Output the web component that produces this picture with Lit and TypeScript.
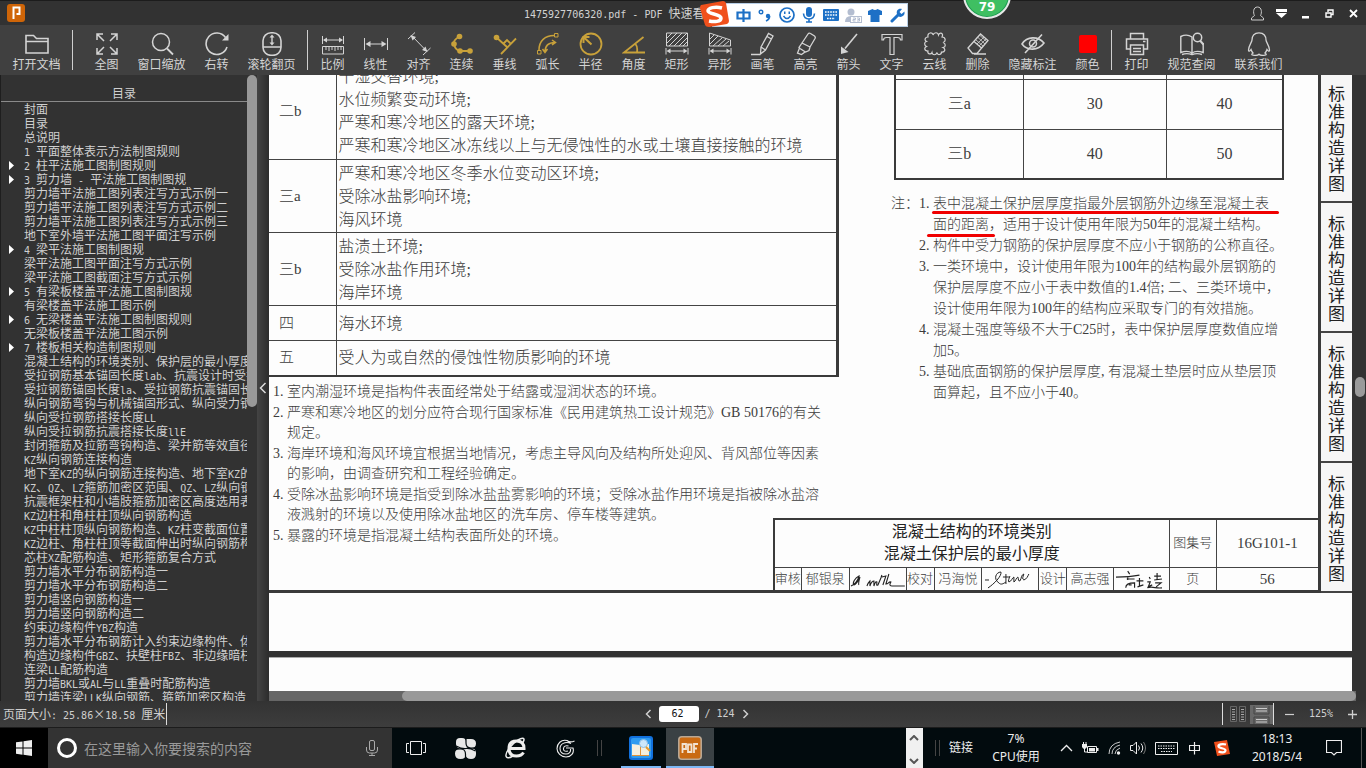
import { LitElement, html, svg, css, TemplateResult } from "lit";
import { customElement } from "lit/decorators.js";
import { classMap } from "lit/directives/class-map.js";

/** Wraps runs of ASCII in a half-width face so that they sit on the same grid as the Chinese text. */
const mixed = (text: string) =>
  text
    .split(/([\x20-\x7e]+)/)
    .filter((s) => s !== "")
    .map((s) => (/^[\x20-\x7e]/.test(s) ? html`<span class="half">${s}</span>` : s));

const icon = (body: TemplateResult, w = 24, h = 24, cls = "ico") =>
  html`<svg class=${cls} width=${w} height=${h} viewBox="0 0 ${w} ${h}" aria-hidden="true">${body}</svg>`;

const G: Record<string, TemplateResult> = {
  folder: svg`<path d="M1 21V3.5h7.5l3 3H23V21z M1 9.5h22" stroke-width="1.6"/>`,
  fit: svg`<path d="M2 8V2h6M2 2l7 7M16 2h6v6M22 2l-7 7M2 16v6h6M2 22l7-7M22 16v6h-6M22 22l-7-7" stroke-width="1.5"/>`,
  zoom: svg`<circle cx="11" cy="10" r="8.5" stroke-width="1.5"/><path d="M17 16.500l6 6" stroke-width="1.8"/>`,
  rotate: svg`<path d="M20.500 5.500A10.700 10.700 0 1 0 22 15" stroke-width="1.6"/><path d="M17 8.500h6.500V2z" class="fill"/>`,
  mouse: svg`<rect x="3" y=".8" width="18" height="22.500" rx="8" stroke-width="1.6"/><path d="M3 15h18M12 4v8" stroke-width="1.4"/><path d="M9.500 5.500L12 2.500l2.500 3zM9.500 10.500L12 13.500l2.500-3z" class="fill"/>`,
  ratio: svg`<path d="M1.500 4v8M22.500 4v8M3 8h18M1.500 14.500h21v7.500h-21zM5 15v3M8 15v4M11 15v3M14 15v4M17 15v3M20 15v3"/><path d="M2 8l4-2.500v5zM22 8l-4-2.500v5z" class="fill"/>`,
  linear: svg`<path d="M.5 6v12M23.500 6v12M3 12h18"/><path d="M1.500 12l5-3v6zM22.500 12l-5-3v6z" class="fill"/>`,
  align: svg`<path d="M1 7l7-6.500M16 23l7.500-7M5 4l14.500 15"/><path d="M3.500 3l5.500 2-3.500 3.500zM20.500 20l-5.500-2 3.500-3.500z" class="fill"/>`,
  chain: svg`<path d="M9.500 4.500Q3 8 4 12q1 6 6 7H20" stroke-width="1.8"/><g class="fill"><circle cx="9.500" cy="4.500" r="2.800"/><circle cx="4" cy="12" r="2.800"/><circle cx="10" cy="19" r="2.800"/><circle cx="20" cy="19" r="2.800"/></g>`,
  perp: svg`<path d="M3 5l11 10M8 22L23 6.500M10 12l4-4 4 4" stroke-width="1.8"/><circle cx="3.500" cy="5.500" r="2.800" class="fill"/>`,
  arc: svg`<path d="M3 18C3 9 9 3.500 18 3.500M9 20c0-6 3-9.500 10-9.500M16 8l3.500 2.500L16 13M6.500 17L9 20.500l2.500-3.500" stroke-width="1.5"/><path d="M1.500 18.500h3.500v3.500H1.500zM18.500 1.500H22V5h-3.500z"/>`,
  radius: svg`<circle cx="12" cy="12" r="10.500" stroke-width="1.800"/><path d="M12.500 12.500L5 5.500M4.500 11V5h6" stroke-width="2"/>`,
  angle: svg`<path d="M21.500 5L2 20.500h21M13.500 12c2 2.500 2 5 1.500 8" stroke-width="1.8"/>`,
  rectA: svg`<path d="M1.500 1h21v13h-21zM2 6l5-5M2 11L12 1M4 14L17 1M9 14L22 1M14 14l8-8M18 14l4-4M1 16v6.500M23 16v6.500M3 19h18"/><path d="M1.500 19l4-2.500v5zM22.500 19l-4-2.500v5z" class="fill"/>`,
  polyA: svg`<path d="M1.500 1L22.500 8v6h-21zM2 7l4-4M2 12l8-8M5 14l9-8M10 14l8-7M15 14l6-5M1 16v6.500M23 16v6.500M3 19h18"/><path d="M1.500 19l4-2.500v5zM22.500 19l-4-2.500v5z" class="fill"/>`,
  pen: svg`<path d="M10 15L17.500 1.500l4.500 2.500-7.500 14-5 4zM10 15l4.500 3M16 4.500l4.500 2.500M0 22.500h9.500" stroke-width="1.3"/>`,
  marker: svg`<path d="M8 11L14 2q1-1.500 2.500-.5l4 2.500q1.300 1 .5 2.500L16 15zM8 11l8 4-1 3.500-3.500 1.500L6 16.500l-1-1zM5.500 16l-2 5 4 1.500 3.500-2.500" stroke-width="1.3"/>`,
  arrow: svg`<path d="M20 2L8 16.500" stroke-width="1.6"/><path d="M4 22V14.500l7.500 5.500z" class="fill"/>`,
  text: svg`<path d="M2 2.500h20V8h-1.500q0-2.500-3-2.500H14v17h-4v-17H6.500q-3 0-3 2.500H2z" stroke-width="1.2"/>`,
  cloud: svg`<path d="M5 5C4 0 10 0 10 3c1-3 5-3 5.500 0C17 0 21 1 19 5c4 0 4 5 1 5.500 3 1 3 4.500 0 5 3 1.500 2 5-1.500 4.500 0 3-4 3.500-4.500.5-1 3-4.500 3-5 0C8 23 4 22 5 19c-4 0-4-3.500-1.500-4.500C1 13.500 1 10 3.500 9.500 1 8 2 5 5 5z" stroke-width="1.2"/>`,
  eraser: svg`<path d="M2 16L14.500 2l7.500 6.500L11 21.500H6.500zM8 9.500l7.500 6.500M8 22h12" stroke-width="1.300"/><path d="M12 5.500l7 6.500M10 8l7 6M14 3.500l6.500 6M18 5l-7 7M20 7l-7 7" stroke-width=".8"/>`,
  hide: svg`<path d="M1 12C6 4 17 4 23 11 17 19 6 19 1 12zM4 21L21 2.500" stroke-width="1.6"/><circle cx="12" cy="11.500" r="3.500" stroke-width="1.5"/>`,
  color: svg`<rect x="3" y="3" width="18" height="18" rx="2" class="red"/>`,
  print: svg`<path d="M5.500 7V1.500h13V7M5 17H1.500V7h21v10H19M5.500 13h13v9.500h-13zM8 16.500h8M8 19.500h8" stroke-width="1.5"/><path d="M18 9.500h2.500" stroke-width="1.5"/>`,
  book: svg`<path d="M12 21C9 19 5 19 .8 20.500V4.500C5 2.500 9 3 12 5v16c3-2 7-2 11.200-.5V11M2 22.500c4-1.500 7-1 10 0 3-1 6-1.500 10 0" stroke-width="1.4"/><circle cx="17.500" cy="5.500" r="4.200" stroke-width="1.5"/><path d="M20 8.500l3.500 4" stroke-width="2"/>`,
  qq: svg`<path d="M12 .8c-5 0-7 3.500-7 7.200 0 2-3.500 6-3.500 10 0 2 1.500 1 2.500-.5.500 1.500 1 2.500 2 3.500-1 .5-2 2 0 2.200 2 .3 5 0 6-1 1 1 4 1.300 6 1 2-.2 1-1.700 0-2.200 1-1 1.500-2 2-3.500 1 1.500 2.500 2.500 2.500.5 0-4-3.500-8-3.500-10C19 4.300 17 .8 12 .8z" stroke-width="1.3"/>`,
};

type Tool = { id: string; label: string; wide?: boolean; gold?: boolean } | null;
const TOOLS: Tool[] = [
  { id: "folder", label: "打开文档", wide: true },
  null,
  { id: "fit", label: "全图" },
  { id: "zoom", label: "窗口缩放", wide: true },
  { id: "rotate", label: "右转" },
  { id: "mouse", label: "滚轮翻页", wide: true },
  null,
  { id: "ratio", label: "比例" },
  { id: "linear", label: "线性" },
  { id: "align", label: "对齐" },
  { id: "chain", label: "连续", gold: true },
  { id: "perp", label: "垂线", gold: true },
  { id: "arc", label: "弧长", gold: true },
  { id: "radius", label: "半径", gold: true },
  { id: "angle", label: "角度", gold: true },
  { id: "rectA", label: "矩形" },
  { id: "polyA", label: "异形" },
  { id: "pen", label: "画笔" },
  { id: "marker", label: "高亮" },
  { id: "arrow", label: "箭头" },
  { id: "text", label: "文字" },
  { id: "cloud", label: "云线" },
  { id: "eraser", label: "删除" },
  { id: "hide", label: "隐藏标注", wide: true },
  { id: "color", label: "颜色" },
  null,
  { id: "print", label: "打印" },
  { id: "book", label: "规范查阅", wide: true },
  { id: "qq", label: "联系我们", wide: true },
];

/** Outline entries; a leading ">" marks one that can be expanded. */
const OUTLINE = [
  "封面", "目录", "总说明", "1 平面整体表示方法制图规则", ">2 柱平法施工图制图规则",
  ">3 剪力墙 - 平法施工图制图规", "剪力墙平法施工图列表注写方式示例一", "剪力墙平法施工图列表注写方式示例二",
  "剪力墙平法施工图列表注写方式示例三", "地下室外墙平法施工图平面注写示例", ">4 梁平法施工图制图规",
  "梁平法施工图平面注写方式示例", "梁平法施工图截面注写方式示例", ">5 有梁板楼盖平法施工图制图规",
  "有梁楼盖平法施工图示例", ">6 无梁楼盖平法施工图制图规则", "无梁板楼盖平法施工图示例",
  ">7 楼板相关构造制图规则", "混凝土结构的环境类别、保护层的最小厚度", "受拉钢筋基本锚固长度lab、抗震设计时受拉",
  "受拉钢筋锚固长度la、受拉钢筋抗震锚固长度", "纵向钢筋弯钩与机械锚固形式、纵向受力钢筋", "纵向受拉钢筋搭接长度LL",
  "纵向受拉钢筋抗震搭接长度llE", "封闭箍筋及拉筋弯钩构造、梁并筋等效直径", "KZ纵向钢筋连接构造",
  "地下室KZ的纵向钢筋连接构造、地下室KZ的", "KZ、QZ、LZ箍筋加密区范围、QZ、LZ纵向钢筋", "抗震框架柱和小墙肢箍筋加密区高度选用表",
  "KZ边柱和角柱柱顶纵向钢筋构造", "KZ中柱柱顶纵向钢筋构造、KZ柱变截面位置", "KZ边柱、角柱柱顶等截面伸出时纵向钢筋构造",
  "芯柱XZ配筋构造、矩形箍筋复合方式", "剪力墙水平分布钢筋构造一", "剪力墙水平分布钢筋构造二", "剪力墙竖向钢筋构造一",
  "剪力墙竖向钢筋构造二", "约束边缘构件YBZ构造", "剪力墙水平分布钢筋计入约束边缘构件、体积",
  "构造边缘构件GBZ、扶壁柱FBZ、非边缘暗柱", "连梁LL配筋构造", "剪力墙BKL或AL与LL重叠时配筋构造",
  "剪力墙连梁LLK纵向钢筋、箍筋加密区构造",
];

const ENV: [string, string[]][] = [
  ["二b", ["干湿交替环境;", "水位频繁变动环境;", "严寒和寒冷地区的露天环境;", "严寒和寒冷地区冰冻线以上与无侵蚀性的水或土壤直接接触的环境"]],
  ["三a", ["严寒和寒冷地区冬季水位变动区环境;", "受除冰盐影响环境;", "海风环境"]],
  ["三b", ["盐渍土环境;", "受除冰盐作用环境;", "海岸环境"]],
  ["四", ["海水环境"]],
  ["五", ["受人为或自然的侵蚀性物质影响的环境"]],
];

const NOTES_LEFT = [
  ["室内潮湿环境是指构件表面经常处于结露或湿润状态的环境。"],
  ["严寒和寒冷地区的划分应符合现行国家标准《民用建筑热工设计规范》GB 50176的有关", "规定。"],
  ["海岸环境和海风环境宜根据当地情况，考虑主导风向及结构所处迎风、背风部位等因素", "的影响，由调查研究和工程经验确定。"],
  ["受除冰盐影响环境是指受到除冰盐盐雾影响的环境；受除冰盐作用环境是指被除冰盐溶", "液溅射的环境以及使用除冰盐地区的洗车房、停车楼等建筑。"],
  ["暴露的环境是指混凝土结构表面所处的环境。"],
];

const NOTES_RIGHT = [
  ["表中混凝土保护层厚度指最外层钢筋外边缘至混凝土表", "面的距离，适用于设计使用年限为50年的混凝土结构。"],
  ["构件中受力钢筋的保护层厚度不应小于钢筋的公称直径。"],
  ["一类环境中，设计使用年限为100年的结构最外层钢筋的", "保护层厚度不应小于表中数值的1.4倍; 二、三类环境中，", "设计使用年限为100年的结构应采取专门的有效措施。"],
  ["混凝土强度等级不大于C25时，表中保护层厚度数值应增", "加5。"],
  ["基础底面钢筋的保护层厚度, 有混凝土垫层时应从垫层顶", "面算起，且不应小于40。"],
];

const base = css`
  :host, * { box-sizing: border-box; }
  button { border: 0; padding: 0; margin: 0; background: none; color: inherit; font: inherit; }
  a { color: inherit; text-decoration: none; }
  ul, ol { list-style: none; margin: 0; padding: 0; }
  svg { display: block; flex: none; fill: none; stroke: currentColor; }
  .fill { fill: currentColor; stroke: none; }
  .half { font-family: "DejaVu Sans Mono", monospace; font-size: 10px; line-height: 12px; white-space: pre; }
`;

@customElement("title-bar")
export class TitleBar extends LitElement {
  static styles = [base, css`
    :host { display: grid; grid-template-columns: minmax(0, 524fr) minmax(0, 842fr); align-items: center; height: 25px; background: #323232; color: #d2d2d2; border-top: 1px solid #1c1c1c; position: relative; }
    .logo { margin-left: 7px; stroke: none; }
    .rest { display: flex; justify-content: space-between; align-items: center; }
    .title { white-space: nowrap; font-weight: 400; font-size: 12px; margin: 0; }
    .ctl { display: flex; margin-right: 1px; color: #fff; }
    .ctl button { width: 24px; height: 24px; display: grid; place-items: center; }
    .ime { position: absolute; z-index: 3; top: 2px; left: 712px; width: 196px; height: 24px; padding-left: 19px; display: flex; align-items: center; background: #fff; border: 1px solid #b9cfe6; color: #1d70c6; }
    .ime span { width: 22px; display: grid; place-items: center; flex: none; }
    .ime .off { color: #b3bdd0; }
    .ime .s { position: absolute; left: -13px; top: -4px; stroke: none; }
    .ball { position: absolute; z-index: 3; top: -30px; left: 963px; width: 48px; height: 48px; border-radius: 50%; border: 2px solid #e8e8e8; background: #3fbf62; box-shadow: inset 0 0 0 1px #1f9a55; color: #fff; font: 700 12px/16px "DejaVu Sans", sans-serif; text-align: center; padding-top: 26px; }
  `];
  render() {
    return html`
      ${icon(svg`<rect width="18" height="18" rx="3" fill="#cf6508"/><path d="M6.500 15V3.500h6v6.500h-3" fill="none" stroke="#fff" stroke-width="2"/>`, 18, 18, "logo")}
      <div class="rest">
        <h1 class="title">${mixed("1475927706320.pdf - PDF 快速看")}</h1>
        <div class="ctl">
          <button aria-label="用户">${icon(svg`<path d="M4.500 9.500C3 7 3 1 7.500 1S12 7 10.500 9.500L13.500 12v2h-12v-2z" stroke="#ccc"/>`, 15, 15)}</button>
          <button aria-label="菜单">${icon(svg`<path d="M0 1h11v3H0zM0 5h11L5.500 10z" class="fill"/>`, 11, 11)}</button>
          <button aria-label="最小化">${icon(svg`<path d="M1 8h7v2.500H1z" class="fill"/>`, 9, 11)}</button>
          <button aria-label="还原">${icon(svg`<path d="M3 3V1h5v4.500H6M1 4h5v4H1z" stroke-width="1.400"/>`, 9, 9)}</button>
          <button aria-label="关闭">${icon(svg`<path d="M1 1l7 7M8 1L1 8" stroke-width="1.800"/>`, 9, 9)}</button>
        </div>
      </div>
      <div class="ime">
        ${icon(svg`<path d="M1 5L23 1q2 0 3 2l3 18q0 2-2 3L9 27q-3 0-4-2L0 8q0-2 1-3z" fill="#f0501c"/><path d="M22 8C15 6 8 8 8 11s13 3 13 7-7 4-12 3" fill="none" stroke="#fff" stroke-width="3.500"/>`, 30, 28, "s")}
        <span>${icon(svg`<path d="M1.500 4.500h12v6h-12zM7.500 1v13" stroke-width="2.200"/>`, 15, 15)}</span>
        <span>${icon(svg`<circle cx="3" cy="4" r="1.800" stroke-width="1.400"/><circle cx="10" cy="8" r="2.200" class="fill"/><path d="M11.500 8q0 3.500-3.500 5" stroke-width="1.800"/>`, 14, 14)}</span>
        <span>${icon(svg`<circle cx="8" cy="8" r="7" stroke-width="1.700"/><path d="M4.500 9q3.500 5 7 0" stroke-width="1.500"/><path d="M5 4.500h1.500v2.500H5zM9.500 4.500H11v2.500H9.500z" class="fill"/>`, 16, 16)}</span>
        <span>${icon(svg`<rect x="4" y="0" width="6" height="10" rx="3" class="fill"/><path d="M1.500 6.500Q2 12 7 12t5.500-5.500M7 12v3M4 15h6" stroke-width="1.600"/>`, 14, 16)}</span>
        <span>${icon(svg`<rect width="16" height="12" y="1" rx="1" class="fill"/><path d="M2 4h12M2 7h12M4 10.500h8" stroke="#fff" stroke-width="1.400" stroke-dasharray="1.600 1"/>`, 16, 14)}</span>
        <span class="off">${icon(svg`<circle cx="6" cy="4" r="3.500" class="fill"/><path d="M0 14q0-6 6-6h2v6z" class="fill"/><rect x="5.500" y="8.500" width="11" height="6" fill="#fff"/><path d="M8 10h2.500v1.500H8V13h2.500M12 10h2.500v3H12M12.500 11.500h2" />`, 17, 15)}</span>
        <span>${icon(svg`<path d="M0 3L4.500 1q2.500 2 5 0L14 3v4h-2.500v7h-9V7H0z" class="fill"/>`, 14, 15)}</span>
        <span>${icon(svg`<path d="M2 13l6-6" stroke-width="3" stroke-linecap="round"/><path d="M14.500 3.500l-3 2.500-2-2L12 1C8 0 6 3 7 6s4 4 6.500 1.500Q15 6 14.500 3.500z" class="fill"/>`, 15, 15)}</span>
      </div>
      <div class="ball">79</div>`;
  }
}

@customElement("tool-bar")
export class ToolBar extends LitElement {
  static styles = [base, css`
    :host { display: flex; height: 50px; padding: 7px 0 0 3px; background: #404040; color: #d4d4d4; font-size: 12px; line-height: 16px; }
    .tool { width: 43px; flex: none; display: flex; flex-direction: column; align-items: center; white-space: nowrap; height: 40px; }
    .wide { width: 67px; }
    .gold svg { color: #c8a13a; }
    .sep { width: 1px; height: 40px; margin: -2px 3px 0 2px; background: #cfcfcf; flex: none; }
    .tool + .lead { margin-right: 12px; }
    .red { fill: #f00; stroke: none; }
  `];
  render() {
    return TOOLS.map((t, i) => t
      ? html`<button class=${classMap({ tool: true, wide: !!t.wide, gold: !!t.gold })}>${icon(G[t.id])}<span>${t.label}</span></button>`
      : html`<span class=${classMap({ sep: true, lead: i === 1 })}></span>`);
  }
}

@customElement("outline-panel")
export class OutlinePanel extends LitElement {
  static styles = [base, css`
    :host { display: grid; grid-template-columns: minmax(0, 1fr) 10px 12px; overflow: hidden; background: #323232; color: #d0d0d0; font-size: 12px; }
    .tree { border-left: 1px solid #1e1e1e; overflow: hidden; min-width: 0; }
    h2 { margin: 0; height: 27px; padding-top: 9px; line-height: 18px; font-size: 12px; font-weight: 400; text-align: center; border-bottom: 1px solid #8a8a8a; }
    a { display: grid; grid-template-columns: 23px minmax(0, 1fr); line-height: 14px; height: 14px; align-items: center; }
    a svg { margin-left: 8px; color: #fff; }
    .name { grid-column: 2; white-space: nowrap; overflow: hidden; line-height: 14px; height: 14px; }
    .thumb { height: 332px; border-radius: 5px; background: #999; }
    .split { display: grid; align-items: center; background: linear-gradient(90deg, #444, #2c2c2c); color: #ddd; }
    .split svg { margin-left: 2px; }
  `];
  render() {
    return html`
      <nav class="tree">
        <h2>目录</h2>
        <ul>${OUTLINE.map((t) => {
          const open = t.startsWith(">");
          return html`<li><a href="#">${open ? icon(svg`<path d="M0 0l5 4.500L0 9z" class="fill"/>`, 5, 9) : ""}<span class="name">${mixed(open ? t.slice(1) : t)}</span></a></li>`;
        })}</ul>
      </nav>
      <div class="track"><div class="thumb"></div></div>
      <button class="split" aria-label="收起目录">${icon(svg`<path d="M6.500 1L1.500 6l5 5" stroke-width="1.500"/>`, 8, 12)}</button>`;
  }
}

@customElement("doc-viewer")
export class DocViewer extends LitElement {
  static styles = [base, css`
    :host { display: grid; grid-template-columns: minmax(0, 1fr) 14px; grid-template-rows: minmax(0, 1fr) 10px; overflow: hidden; background: #323232; color: #3c3c3c; font-family: "Liberation Serif", "Noto Sans CJK SC", serif; font-weight: 300; }
    .pages { overflow: hidden; min-width: 0; }
    .page { margin-top: -10px; display: grid; grid-template-columns: minmax(0, 1fr) 31px; padding-bottom: 58px; background: #fdfdfd; }
    .next { margin-top: 6px; height: 60px; background: #fdfdfd; border-top: 1px solid #aaa; }
    .frame { display: grid; grid-template-columns: 570fr 479fr; border-right: 3px solid #3a3a3a; border-bottom: 3px solid #3a3a3a; }
    .left, .right { grid-row: 1; min-width: 0; }
    .left { grid-column: 1; }
    .right { grid-column: 2; padding: 0 34px 0 52px; }
    table { border-collapse: collapse; width: 100%; table-layout: fixed; }
    td, th { padding: 0; font-weight: 300; border: 1px solid #444; }
    .env { border-right: 3px solid #3a3a3a; border-bottom: 2px solid #3a3a3a; font-size: 16px; line-height: 23px; }
    .env th { width: 67px; text-align: left; padding-left: 10px; border-left: 0; font-size: 15px; }
    .env td { padding-left: 2px; white-space: nowrap; }
    .env tr:first-child > * { border-top: 0; padding-bottom: 2px; }
    .env tr { height: 35px; }
    .env tr:nth-child(2), .env tr:nth-child(3) { height: 73px; }
    .notes { font-size: 14px; line-height: 20px; padding: 5px 0 0 4px; display: grid; gap: 1px; }
    .notes li, .cover-notes li { display: grid; grid-template-columns: 14px minmax(0, 1fr); white-space: nowrap; }
    .cover { margin-left: 3px; width: calc(100% - 3px); border: 2px solid #3a3a3a; border-top: 0; text-align: center; font-size: 16px; }
    .cover tr { height: 50px; }
    .cover tr:first-child { height: 14px; }
    .cover tr:first-child td { border-top: 0; }
    .c1 { width: 33%; }
    .c2 { width: 37%; }
    .cover-notes { display: grid; grid-template-columns: 28px minmax(0, 1fr); font-size: 14px; line-height: 21px; padding-top: 13px; white-space: nowrap; }
    .line { position: relative; }
    .mark { position: absolute; height: 3px; border-radius: 2px; background: #f00000; left: -1px; bottom: 0; width: 347px; }
    .mark.second { left: -6px; bottom: -2px; width: 68px; }
    .block { grid-row: 1; grid-column: 1 / 3; align-self: end; justify-self: end; width: 52%; border: 2px solid #3a3a3a; border-right: 0; border-bottom: 0; text-align: center; font-size: 15px; background: #fdfdfd; }
    .block td { white-space: nowrap; height: 23px; line-height: 22px; border-bottom: 0; }
    .block .head { height: 48px; font-size: 16px; color: #222; font-weight: 400; }
    .block .sm { font-size: 13px; }
    .block .last { border-right: 0; }
    .block svg { margin: 0 auto; width: 100%; color: #222; }
    .tabs { background: #f6f6f6; color: #222; font: 400 17px/18px "Noto Sans CJK SC", sans-serif; }
    .tab { height: 130px; padding: 0 7px 9px; border-bottom: 2px solid #444; display: flex; align-items: flex-end; justify-content: center; }
    .tab span { width: 17px; word-break: break-all; }
    .tab:first-child { height: 138px; }
    .vtrack { position: relative; }
    .vthumb { position: absolute; left: 3px; top: 302px; width: 10px; height: 20px; border-radius: 5px; background: #9a9a9a; }
    .htrack { grid-column: 1 / 3; display: grid; grid-template-columns: 133fr 954fr 10px; background: #666; }
    .hthumb { grid-column: 2; background: #999; border-radius: 5px; }
    .hend { background: #323232; }
  `];
  private notes(list: string[][], marks = false) {
    return list.map((lines, i) => html`<li><span>${i + 1}.</span><div>${lines.map((l, j) => html`<div class="line">${l}${marks && i === 0 ? html`<span class=${classMap({ mark: true, second: j === 1 })}></span>` : ""}</div>`)}</div></li>`);
  }
  render() {
    return html`
      <div class="pages">
        <section class="page">
          <div class="frame">
            <div class="left">
              <table class="env"><tbody>${ENV.map(([k, v]) => html`<tr><th scope="row">${k}</th><td>${v.map((l) => html`<div>${l}</div>`)}</td></tr>`)}</tbody></table>
              <ol class="notes">${this.notes(NOTES_LEFT)}</ol>
            </div>
            <div class="right">
              <table class="cover"><tbody>
                <tr><td class="c1"></td><td class="c2"></td><td></td></tr>
                <tr><td>三a</td><td>30</td><td>40</td></tr>
                <tr><td>三b</td><td>40</td><td>50</td></tr>
              </tbody></table>
              <div class="cover-notes"><span>注：</span><ol>${this.notes(NOTES_RIGHT, true)}</ol></div>
            </div>
            <table class="block">
              <colgroup>${[28, 48, 57, 28, 48, 57, 28, 47, 56, 47, 102].map((w) => html`<col style="width:${(w / 5.46).toFixed(2)}%">`)}</colgroup>
              <tbody>
                <tr><td class="head" colspan="9">混凝土结构的环境类别<br>混凝土保护层的最小厚度</td><td class="sm">图集号</td><td class="last">16G101-1</td></tr>
                <tr>
                  <td class="sm">审核</td><td class="sm">郁银泉</td>
                  <td>${icon(svg`<path d="M1 18c4-2 7-6 8-10-4 2-7 7-5 9 3-1 5-6 6-8-1 4-2 7-1 8M17 18c1-3 2-4 3-5v5c1-3 2-5 4-5v5c1-3 2-5 3-4 0 2-1 4 1 3l3-7 1-3M32 9l4-1-3 9M39 6l-3 10c3 0 3-3 5-2-1 2-2 4 1 4h13" stroke-width="1.100"/>`, 56, 22)}</td>
                  <td class="sm">校对</td><td class="sm">冯海悦</td>
                  <td>${icon(svg`<path d="M3 12h4M6 20C12 16 20 8 19 4c-5 0-8 7-2 11 2 2 4 1 7-1M24 6v10M21 9h6M28 8c-1 3-2 5-1 6 3-1 3-4 5-5v5c2-1 2-4 4-5 1 3 0 4 2 4 2-3 1-6 4-7-1 3-2 5 0 6 3-1 4-4 5-6" stroke-width="1"/>`, 56, 22)}</td>
                  <td class="sm">设计</td><td class="sm">高志强</td>
                  <td>${icon(svg`<path d="M2 9c6 0 14 0 24-2M14 3l2 3M13 11h8M14 9v3M12 20c0-4 4-5 9-5v5M15 17h3M26 10v8M23 13h7M24 19l6-2M36 9l1 2M34 14h3l-2 5 4-2M41 8h7M44 5v7M41 12l8-1M42 15h6l-5 4M34 20c5-2 9 1 15 0" stroke-width="1.200"/>`, 56, 22)}</td>
                  <td class="sm">页</td><td class="last">56</td>
                </tr>
              </tbody>
            </table>
          </div>
          <aside class="tabs">${[0, 1, 2, 3].map(() => html`<div class="tab"><span>标准构造详图</span></div>`)}</aside>
        </section>
        <section class="next"></section>
      </div>
      <div class="vtrack"><div class="vthumb"></div></div>
      <div class="htrack"><div class="hthumb"></div><div class="hend"></div></div>`;
  }
}

@customElement("status-bar")
export class StatusBar extends LitElement {
  static styles = [base, css`
    :host { display: grid; grid-template-columns: minmax(0, 642fr) auto minmax(0, 614fr); align-items: center; height: 27px; background: linear-gradient(#333, #3d3d3d); border-bottom: 1px solid #1c1c1c; color: #cfcfcf; font-size: 12px; }
    .size { padding-left: 3px; display: flex; align-items: center; white-space: nowrap; }
    .bar { width: 1px; height: 22px; background: #ddd; margin-left: 1px; }
    .nav { display: flex; align-items: center; gap: 5px; }
    .nav button, .zoom button { width: 12px; height: 16px; display: grid; place-items: center; }
    input { width: 40px; height: 16px; border: 0; border-radius: 3px; padding: 0 4px 0 0; background: #fff; color: #111; text-align: center; font: 10px/16px "DejaVu Sans Mono", monospace; }
    .zoom { display: flex; align-items: center; justify-content: flex-end; padding-right: 8px; }
    .mode { margin: 0 0 0 7px; color: #aaa; }
    .two + .mode { margin-left: 4px; }
    .zoom .bar { margin: 0; }
    .zoom .minus { margin: 0 13px 0 10px; }
    .zoom .plus { margin-left: 13px; }
  `];
  render() {
    return html`
      <div class="size"><span>${mixed("页面大小: 25.86×18.58 厘米")}</span><span class="bar"></span></div>
      <div class="nav">
        <button aria-label="上一页">${icon(svg`<path d="M5.500 1L1.500 5l4 4" stroke-width="1.500"/>`, 7, 10)}</button>
        <input aria-label="页码" value="62">
        <span class="half">/ 124</span>
        <button aria-label="下一页">${icon(svg`<path d="M1.500 1l4 4-4 4" stroke-width="1.500"/>`, 7, 10)}</button>
      </div>
      <div class="zoom">
        <span class="bar"></span>
        <span class="mode two">${icon(svg`<path d="M.5.500h6v15h-6zM9.500.500h6v15h-6z" stroke="#666"/><path d="M2 3.500h3M2 6h3M2 8.500h3M2 11h3M2 13.500h3M11 3.500h3M11 6h3M11 8.500h3M11 11h3M11 13.500h3"/>`, 16, 16)}</span>
        <span class="mode">${icon(svg`<path d="M0 0h23v19H0z" fill="#686868" stroke="none"/><path d="M4 1v8h15V1M4 19v-7h15v7" stroke="#444"/><path d="M6 3.500h11M6 6h11M6 14.500h11M6 17h11" stroke="#ccc"/>`, 23, 19)}</span>
        <span class="bar"></span>
        <button class="minus" aria-label="缩小">${icon(svg`<path d="M0 4.500h9" stroke-width="1.200"/>`, 9, 9)}</button>
        <span class="half">125%</span>
        <button class="plus" aria-label="放大">${icon(svg`<path d="M0 4.500h9M4.500 0v9" stroke-width="1.300"/>`, 9, 9)}</button>
      </div>`;
  }
}

@customElement("task-bar")
export class TaskBar extends LitElement {
  static styles = [base, css`
    :host { display: flex; height: 40px; background: #020b0e; color: #eee; font: 12px/18px "Noto Sans", "Noto Sans CJK SC", sans-serif; }
    button { display: grid; place-items: center; flex: none; position: relative; }
    .w48 { width: 48px; } .w50 { width: 50px; } .w24 { width: 24px; } .w32 { width: 32px; }
    .start { background: #000; }
    .search { width: 344px; flex: none; display: flex; align-items: center; background: #333; padding: 0 14px 0 9px; gap: 7px; color: #aaa; }
    .search input { flex: 1; min-width: 0; border: 0; padding: 0; background: none; outline: 0; font: 14px/20px "Noto Sans CJK SC", sans-serif; color: #eee; }
    .search input::placeholder { color: #999; opacity: 1; }
    .ring { width: 20px; height: 20px; border-radius: 50%; border: 3px solid #fff; flex: none; }
    .run { box-shadow: inset 0 -2px 0 #7cb7f5; }
    .on { background: #3a4144; margin-left: 5px; }
    .w40 { width: 40px; }
    .bars { width: 5px; height: 16px; border: 1px solid #444; border-width: 0 1px; align-self: center; flex: none; }
    .gap { margin: 0 17px 0 7px; }
    .spin { width: 17px; background: #f0f0f0; color: #555; margin-left: auto; display: flex; flex-direction: column; justify-content: space-between; padding: 7px 0 4px; align-items: center; flex: none; }
    .txt { display: flex; flex-direction: column; justify-content: center; align-items: center; text-align: center; white-space: nowrap; flex: none; }
    .links { margin: 0 5px 0 9px; }
    .grip { margin-left: 12px; }
    .cpu { width: 76px; }
    .clock { width: 78px; }
    .note { width: 36px; margin-right: 9px; }
    .gap + .run { margin-left: 2px; }
    .desk { width: 5px; border-left: 1px solid #555; flex: none; }
    .ns { stroke: none; }
  `];
  render() {
    const sogou = icon(svg`<path d="M0 2L13 0l3 14L3 16z" fill="#f0501c"/><path d="M12 4.500C8 3.500 4 4.500 4.500 6.500S12 8 11.500 10.500 7 12.500 4.500 11.500" fill="none" stroke="#fff" stroke-width="2.200"/>`, 16, 16, "ns");
    return html`
      <button class="w48 start" aria-label="开始">${icon(svg`<path d="M0 2.300L6.500 1.400V7.600H0zM7.500 1.200L16 0v7.600H7.500zM0 8.500h6.500v6.200L0 13.800zM7.500 8.500H16V16l-8.500-1.200z" class="fill"/>`, 16, 16)}</button>
      <div class="search">
        <span class="ring"></span>
        <input aria-label="搜索" placeholder="在这里输入你要搜索的内容">
        ${icon(svg`<rect x="3.500" y=".5" width="5" height="10" rx="1.500"/><path d="M.5 7v3q0 3 3 3h5q3 0 3-3V7M6 13v3M3 15.500h6"/>`, 12, 16)}
      </div>
      <button class="w48" aria-label="任务视图">${icon(svg`<path d="M4.500.500h11v13h-11zM3 2.500H.5v9H3M17 2.500h2.500v9H17"/>`, 20, 14)}</button>
      <button class="w50" aria-label="风扇">${icon(svg`<g fill="#e8e8e8" stroke="none"><path d="M1 4q0-4 4-4h2q4 0 4 4v7H6Q1 10 1 6z"/><path d="M11 1h5q5 0 5 4.500T16 10h-5z"/><path d="M10 10.500h7q4 0 4 4.500v1q0 5-5 5t-6-5z"/><path d="M0 15.500Q0 11 5 11h6v5q0 5-5.500 5T0 15.500z"/></g><path d="M11 0v5q0 5 5 5h5M10.500 21v-5q0-5-5-5H0M1 8q6 3 10 2.500T20.500 13" stroke="#020b0e" stroke-width="1.200"/>`, 21, 21)}</button>
      <button class="w50" aria-label="浏览器">${icon(svg`<path d="M5 11.500h14q0-7.500-7.500-7.500T4 11.500 11.500 19q5 0 7-3.500" stroke-width="3"/><path d="M17.500 6C21 1 18 0 13 3 6 7-1 17 1.500 20c1 1.500 4 .5 6.500-1" stroke-width="1.500"/>`, 21, 22)}</button>
      <button class="w50" aria-label="G">${icon(svg`<path d="M18.500 2Q14 4 11 1.500C5 0 1 5 1 9.500S5 18 10 18s8.500-4 7-9H10M15 4.500C9 2 4 5 4 9.500S7 15 10 15s5-2 4.500-5M12.500 7Q8 6 7.500 9.500T12 12" stroke-width="1.100"/>`, 19, 19)}</button>
      <span class="bars gap"></span>
      <button class="w40 run" aria-label="图书">${icon(svg`<rect width="24" height="24" rx="3" fill="#1271dd"/><rect x="2" y="2" width="20" height="20" rx="2" fill="#2f9bf0"/><path d="M3 8l8 1 9-1v11l-9 1-8-1z" fill="#f5efdf"/><path d="M11.500 9v11M3 19.500h17" stroke="#e0923a"/><circle cx="14.500" cy="7.500" r="4" fill="#cfe8fb" stroke="#8cbfe8"/><path d="M17 11l4 4" stroke="#e59a2f" stroke-width="2"/>`, 24, 24, "ns")}</button>
      <button class="w48 run on" aria-label="PDF">${icon(svg`<rect x=".8" y=".8" width="22.400" height="22.400" rx="3" fill="#c96a12" stroke="#b9a793" stroke-width="1.600"/><path d="M4.500 17V8h3.500v5H5M10 8.500V16h3.500V8.500zM16 17V8h4M16 12.500h3" stroke="#f2e3d2" stroke-width="1.800" fill="none"/>`, 24, 24, "ns")}</button>
      <div class="spin">
        ${icon(svg`<path d="M1 5l4-4 4 4" stroke-width="2"/>`, 10, 6)}
        ${icon(svg`<path d="M1 1l4 4 4-4" stroke-width="2"/>`, 10, 6)}
      </div>
      <span class="bars grip"></span>
      <div class="txt links">链接</div>
      <div class="txt cpu"><span>7%</span><span>CPU使用</span></div>
      <button class="w24" aria-label="显示隐藏的图标">${icon(svg`<path d="M1 7l5.500-5.500L12 7" stroke-width="1.300"/>`, 13, 8)}</button>
      <button class="w24" aria-label="电源">${icon(svg`<path d="M5.500 4.500h9v6h-9z"/><path d="M7 6h6v3.500H7zM15 6h1.500v3H15zM0 2h5v3q-1 2-2.500 2T0 5z" class="fill"/><path d="M1.500 0v2M4 0v2M2.500 6v4h3"/>`, 17, 12)}</button>
      <button class="w24" aria-label="网络">${icon(svg`<path d="M1 13Q1 3 12 1M4 13q0-7 8-9M7 13q0-4 5-6" stroke="#ccc"/><circle cx="10.500" cy="12" r="1.700" class="fill"/>`, 13, 14)}</button>
      <button class="w24" aria-label="音量">${icon(svg`<path d="M.5 4.500H3L6.500 1v12L3 9.500H.5zM8.500 4.500q2 2.500 0 5M11 2.500q3.500 4.500 0 9"/><path d="M13.500 1q4 6 0 12" stroke="#777"/>`, 17, 14)}</button>
      <button class="w32" aria-label="键盘">${icon(svg`<path d="M.5.500h22v12H.5z"/><path d="M3 4h17M3 6.500h17M6 9.500h11" stroke-dasharray="1.500 1"/>`, 23, 13)}</button>
      <button class="w24" aria-label="输入法">${icon(svg`<path d="M.5 3.500h10v5H.5zM5.500 0v12.500" stroke-width="1.200"/>`, 11, 13)}</button>
      <button class="w32" aria-label="搜狗">${sogou}</button>
      <div class="txt clock"><span>18:13</span><span>2018/5/4</span></div>
      <button class="note" aria-label="通知">${icon(svg`<path d="M.5.500h15v12H10.500L8 15 5.500 12.500h-5z" stroke-width="1.200"/>`, 16, 16)}</button>
      <span class="desk"></span>`;
  }
}

@customElement("app-root")
export class AppRoot extends LitElement {
  static styles = css`
    :host { display: grid; grid-template-rows: auto auto minmax(0, 1fr) auto auto; height: 100vh; overflow: hidden; background: #323232; font: 12px/16px "Noto Sans CJK SC", sans-serif; }
    .body { display: grid; grid-template-columns: 269px minmax(0, 1fr); grid-template-rows: minmax(0, 1fr); min-height: 0; }
  `;
  render() {
    return html`
      <title-bar></title-bar>
      <tool-bar></tool-bar>
      <main class="body"><outline-panel></outline-panel><doc-viewer></doc-viewer></main>
      <status-bar></status-bar>
      <task-bar></task-bar>`;
  }
}
